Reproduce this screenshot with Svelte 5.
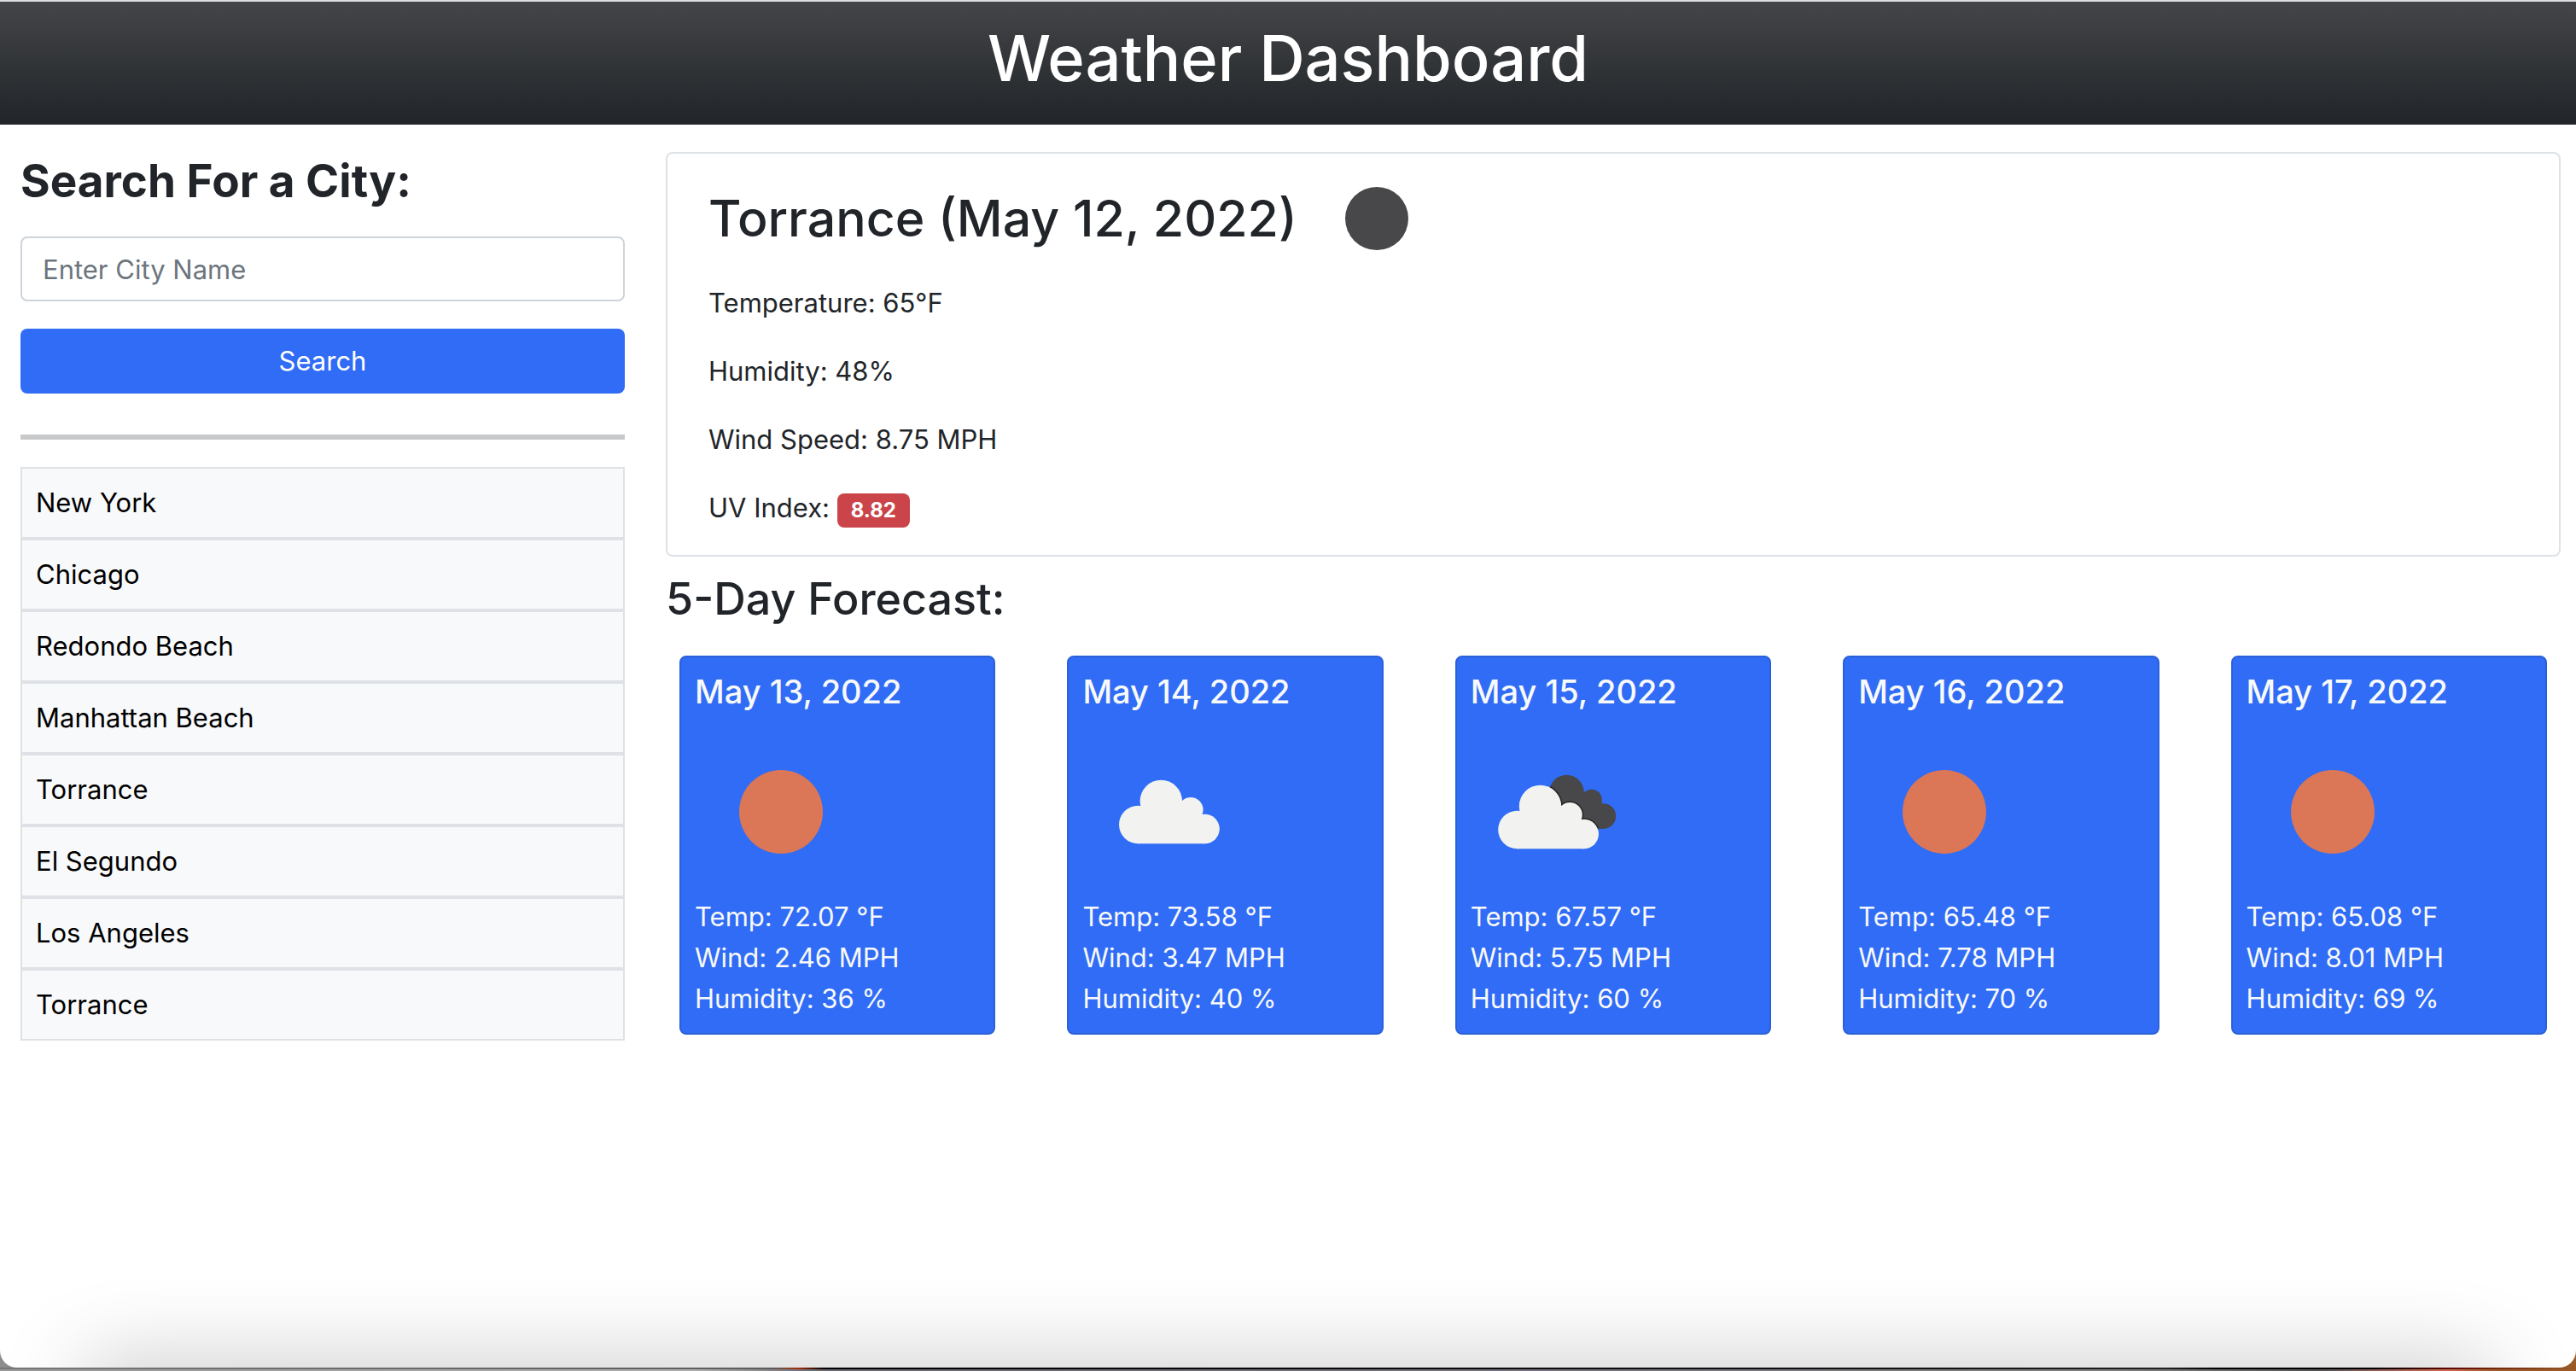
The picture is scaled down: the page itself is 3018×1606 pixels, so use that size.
<script>
  let city = $state('');
  const history = ['New York', 'Chicago', 'Redondo Beach', 'Manhattan Beach', 'Torrance', 'El Segundo', 'Los Angeles', 'Torrance'];
  const forecast = [
    { date: 'May 13, 2022', icon: 'sun', temp: '72.07', wind: '2.46', humidity: 36 },
    { date: 'May 14, 2022', icon: 'cloud', temp: '73.58', wind: '3.47', humidity: 40 },
    { date: 'May 15, 2022', icon: 'broken', temp: '67.57', wind: '5.75', humidity: 60 },
    { date: 'May 16, 2022', icon: 'sun', temp: '65.48', wind: '7.78', humidity: 70 },
    { date: 'May 17, 2022', icon: 'sun', temp: '65.08', wind: '8.01', humidity: 69 }
  ];
</script>

{#snippet cloudShape()}
  <circle cx="91.3" cy="88.4" r="24.7" />
  <circle cx="64.3" cy="116" r="22.3" />
  <circle cx="126" cy="98.6" r="14.6" />
  <circle cx="142.5" cy="121" r="17.3" />
  <path d="M64 138.3V105L80 88H126L142.5 121V138.3Z" />
{/snippet}

{#snippet rearCloud()}
  <circle cx="112.4" cy="78" r="20.3" />
  <circle cx="141.6" cy="87" r="12.3" />
  <circle cx="155.5" cy="106" r="14.7" />
  <path d="M100 80H132L154 90L156 120.7H110Z" />
{/snippet}

<div class="desktop">
  <div class="window">
    <header><h1>Weather Dashboard</h1></header>

    <div class="layout">
      <aside>
        <form onsubmit={(e) => e.preventDefault()}>
          <h3><label for="city">Search For a City:</label></h3>
          <input id="city" type="text" placeholder="Enter City Name" bind:value={city} />
          <button class="search" type="submit">Search</button>
        </form>
        <hr />
        <div class="history">
          {#each history as name}
            <button type="button" onclick={() => (city = name)}>{name}</button>
          {/each}
        </div>
      </aside>

      <main>
        <section class="current">
          <div class="place">
            <h2>Torrance (May 12, 2022)</h2>
            <svg viewBox="0 0 74 74" aria-hidden="true"><circle cx="37" cy="37" r="37" fill="#48484a" /></svg>
          </div>
          <p>Temperature: 65°F</p>
          <p>Humidity: 48%</p>
          <p>Wind Speed: 8.75 MPH</p>
          <p>UV Index: <span class="badge">8.82</span></p>
        </section>

        <h3 class="forecast-title">5-Day Forecast:</h3>
        <section class="forecast">
          {#each forecast as day}
            <article>
              <h5>{day.date}</h5>
              <svg viewBox="0 0 200 200" aria-hidden="true">
                {#if day.icon === 'sun'}
                  <circle cx="101" cy="101" r="49" fill="#db7657" />
                {:else if day.icon === 'cloud'}
                  <g fill="#f2f2f0" transform="translate(1 0)">{@render cloudShape()}</g>
                {:else}
                  <clipPath id="rear-cloud">{@render rearCloud()}</clipPath>
                  <g fill="#48484a">{@render rearCloud()}</g>
                  <g clip-path="url(#rear-cloud)">
                    <g fill="#242426" stroke="#242426" stroke-width="3" transform="translate(-9.8 6)">{@render cloudShape()}</g>
                  </g>
                  <g fill="#f2f2f0" transform="translate(-9.8 6)">{@render cloudShape()}</g>
                {/if}
              </svg>
              <p>Temp: {day.temp} °F</p>
              <p>Wind: {day.wind} MPH</p>
              <p>Humidity: {day.humidity} %</p>
            </article>
          {/each}
        </section>
      </main>
    </div>

    <footer></footer>
  </div>
  <div class="edge"></div>
</div>

<style>
  :global(body) {
    margin: 0;
  }
  :global(*) {
    box-sizing: border-box;
  }
  .desktop {
    min-height: 100vh;
    display: flex;
    flex-direction: column;
    background: linear-gradient(90deg, #8c8c8c 50%, #9a5a28 50%);
    color: #212529;
    font-family: Inter, 'Liberation Sans', sans-serif;
    font-size: 31px;
    line-height: 48px;
  }
  .window {
    flex: 1;
    display: flex;
    flex-direction: column;
    background: #fff;
    border-top: 2px solid #dcdddf;
    border-radius: 0 0 20px 20px;
    overflow: hidden;
  }
  h1, h2, h3, h5, p {
    margin: 0;
    font-weight: 500;
  }
  header {
    height: 144px;
    padding-top: 18px;
    background: linear-gradient(#444548, #303336 55%, #212429);
    color: #fff;
    text-align: center;
  }
  h1 {
    font-size: 74px;
    line-height: 96px;
  }
  .layout {
    display: grid;
    grid-template-columns: 1fr 3fr;
    padding: 32px 18px 0 0;
  }
  aside {
    padding: 0 18px 0 24px;
  }
  aside h3 {
    font-weight: 700;
    font-size: 53px;
    line-height: 68px;
  }
  input {
    display: block;
    width: 100%;
    height: 76px;
    margin: 31px 0 32px;
    padding: 0 24px;
    border: 2px solid #ced4da;
    border-radius: 8px;
    background: #fff;
    color: #212529;
    font: inherit;
  }
  input::placeholder {
    color: #6c757d;
    opacity: 1;
  }
  .search {
    display: block;
    width: 100%;
    height: 76px;
    border: 0;
    border-radius: 8px;
    background: #306cf5;
    color: #fff;
    font: inherit;
  }
  hr {
    height: 6px;
    margin: 48px 0 32px;
    border: 0;
    background: #c8c9ca;
  }
  .history button {
    display: block;
    width: 100%;
    padding: 16px;
    border: 2px solid #dee2e6;
    background: #f8f9fb;
    color: #000;
    font: inherit;
    text-align: left;
  }
  main {
    padding-left: 30px;
  }
  .current {
    padding: 30px 48px 31px;
    border: 2px solid #dee2e6;
    border-radius: 8px;
  }
  .place {
    display: flex;
    align-items: center;
    gap: 56px;
    height: 92px;
    margin-bottom: 29px;
  }
  .place svg {
    width: 74px;
    height: 74px;
  }
  h2 {
    font-size: 59px;
    line-height: 76px;
  }
  .current p {
    font-weight: 400;
  }
  .current p + p {
    margin-top: 32px;
  }
  .badge {
    display: inline-block;
    padding: 0 16px;
    border-radius: 8px;
    background: #ca444a;
    color: #fff;
    font-size: 24px;
    font-weight: 700;
    line-height: 40px;
  }
  .forecast-title {
    margin: 16px 0 32px;
    font-size: 52px;
    line-height: 68px;
  }
  .forecast {
    display: grid;
    grid-template-columns: repeat(5, 1fr);
    gap: 84px;
    padding: 0 16px;
  }
  article {
    padding: 16px;
    border: 2px solid #2a60d8;
    border-radius: 8px;
    background: #306cf5;
    color: #f8f9fa;
  }
  article p {
    font-weight: 400;
  }
  h5 {
    margin-bottom: 16px;
    font-size: 38px;
    line-height: 48px;
  }
  article svg {
    display: block;
    width: 200px;
    height: 200px;
  }
  footer {
    height: 120px;
    margin-top: auto;
    padding: 120px 100px 0;
    overflow: hidden;
  }
  footer::after {
    content: '';
    display: block;
    height: 60px;
    box-shadow: 0 0 100px rgba(0, 0, 0, 0.28);
  }
  .edge {
    height: 4px;
    border-top: 2px solid #000;
    border-image: linear-gradient(90deg, #777 0, #5c5c5c 30%, #a33010 31%, #000 32%, #111 75%, #222 84%, #000 86%, #000 92%, #5a0a00 95%, #9a5a28) 1;
    background: linear-gradient(90deg, #999 3%, #b0b0ae 27%, #6a6570 32%, #777080 60%, #80807c 82%, #555 90%, #d06858 95%, #9a5a28 97%);
  }
</style>
